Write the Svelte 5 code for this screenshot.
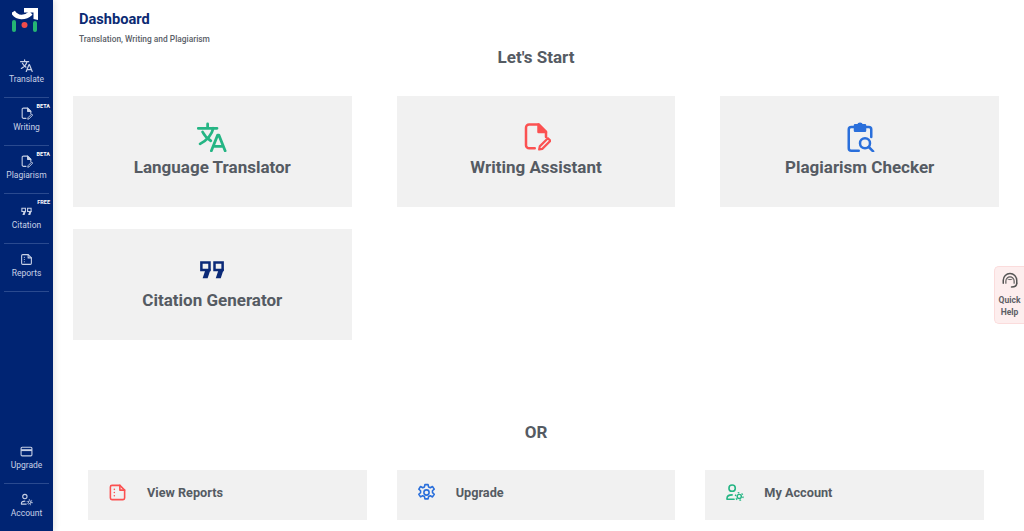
<script>
  const navTop = [
    { label: 'Translate', icon: 'translate' },
    { label: 'Writing', icon: 'write', badge: 'BETA' },
    { label: 'Plagiarism', icon: 'write', badge: 'BETA' },
    { label: 'Citation', icon: 'quote', badge: 'FREE', tall: true },
    { label: 'Reports', icon: 'report' }
  ];
  const cards = [
    { label: 'Language Translator', icon: 'translate', cls: 'green' },
    { label: 'Writing Assistant', icon: 'write', cls: 'red' },
    { label: 'Plagiarism Checker', icon: 'clip', cls: 'blue' },
    { label: 'Citation Generator', icon: 'quote', cls: 'navy' }
  ];
  const links = [
    { label: 'View Reports', icon: 'report', cls: 'red' },
    { label: 'Upgrade', icon: 'gear', cls: 'blue' },
    { label: 'My Account', icon: 'user', cls: 'green' }
  ];
</script>

{#snippet icon(name)}
  <svg viewBox="0 0 24 24" fill="none" stroke="currentColor" stroke-width="2" stroke-linecap="round" stroke-linejoin="round">
    {#if name === 'translate'}
      <path d="M1 5h15M8.500 1.500V5M13 5c-1 4.500-5 9.500-10.500 12.500M4.500 8c1.500 3 4 5.500 6.500 7" stroke-width="2.200" />
      <path d="M11.500 23 16.500 10.500h1L22.500 23M13 19.500h8" stroke-width="2.200" />
    {:else if name === 'write'}
      <g transform="translate(1 0)">
        <path d="M10 21H5.500A2.500 2.500 0 0 1 3 18.500v-14A2.500 2.500 0 0 1 5.500 2H13l6 6v4" />
        <path d="M13 2v6h6z" fill="currentColor" />
        <path d="m13.500 22 .5-2.500 6.500-6.500 2 2-6.500 6.500z" stroke-width="1.700" />
      </g>
    {:else if name === 'clip'}
      <path d="M8 4H5a2 2 0 0 0-2 2v15a2 2 0 0 0 2 2h6M16 4h3a2 2 0 0 1 2 2v6" />
      <path d="M8 2.500h2.500a1.600 1.600 0 0 1 3 0H16V7H8z" fill="currentColor" />
      <circle cx="16" cy="17" r="4" />
      <path d="m19 20 3.500 3.500" />
    {:else if name === 'quote'}
      <path d="M3.500 6h6.500v6H3.500zM14 6h6.500v6H14z" stroke-linecap="butt" stroke-linejoin="miter" />
      <path d="M11 11 8.500 18.500H4.500L6.500 12.500zM21.500 11 19 18.500h-4l2-6z" fill="currentColor" stroke="none" />
    {:else if name === 'report'}
      <path d="M5 3h10l6 6v10a2 2 0 0 1-2 2H5a2 2 0 0 1-2-2V5a2 2 0 0 1 2-2z" />
      <path d="M15 3v6h6" />
      <path d="M8 8v.01M8 12v.01M8 16v.01" />
    {:else if name === 'gear'}
      <circle cx="12" cy="12" r="3.300" />
      <path d="M10 2h4l.6 3 2.300 1 2.600-1.600 2.300 3.400-2.300 2 .1 2.400 2.200 2-2.200 3.400-2.700-1.500-2.200 1-.7 3h-4l-.6-3-2.300-1-2.600 1.500-2.200-3.400 2.200-2v-2.400l-2.200-2 2.200-3.400 2.700 1.600 2.200-1z" />
    {:else if name === 'user'}
      <circle cx="9" cy="6.500" r="4" />
      <path d="M2.500 20.500v-1c0-2.800 2.500-4.500 6.500-4.500M2.500 20.500h9" />
      <circle cx="18" cy="17" r="2.600" stroke-width="1.800" />
      <circle cx="18" cy="17" r="4.800" stroke-width="1.800" stroke-linecap="butt" stroke-dasharray="2 3.030" />
    {/if}
  </svg>
{/snippet}

<div class="app">
  <aside class="side">
    <div class="logo">
      <svg viewBox="0 0 26 26" width="26" height="26">
        <path d="M1 5c4 6.500 12 6.500 18 1" fill="none" stroke="#fff" stroke-width="4.500" />
        <path d="M12 1h14v12l-4.500-1V5.500H12z" fill="#fff" />
        <rect x="0" y="13" width="4" height="12" rx="2" fill="#25b574" />
        <rect x="21" y="14" width="4" height="11" rx="2" fill="#25b574" />
        <circle cx="12.500" cy="18" r="3" fill="#f04b4b" />
      </svg>
    </div>
    <nav class="nav">
      {#each navTop as item}
        <div class="nav-item" class:tall={item.tall}>
          {#if item.badge}<span class="badge">{item.badge}</span>{/if}
          <span class="nav-icon">{@render icon(item.icon)}</span>
          <span>{item.label}</span>
        </div>
      {/each}
    </nav>
    <div class="nav bottom">
      <div class="nav-item">
        <span class="nav-icon">
          <svg viewBox="0 0 24 24" fill="none" stroke="currentColor" stroke-width="2">
            <rect x="2" y="4" width="20" height="16" rx="2" /><path d="M2 9.500h20" stroke-width="3.500" />
          </svg>
        </span>
        <span>Upgrade</span>
      </div>
      <div class="nav-item">
        <span class="nav-icon">{@render icon('user')}</span>
        <span>Account</span>
      </div>
    </div>
  </aside>

  <main class="main">
    <header class="head">
      <h1>Dashboard</h1>
      <p>Translation, Writing and Plagiarism</p>
    </header>
    <h2 class="start">Let's Start</h2>
    <section class="cards">
      {#each cards as card}
        <div class="card">
          <span class="card-icon {card.cls}">{@render icon(card.icon)}</span>
          <span>{card.label}</span>
        </div>
      {/each}
    </section>
    <h2 class="or">OR</h2>
    <section class="links">
      {#each links as link}
        <div class="link">
          <span class="link-icon {link.cls}">{@render icon(link.icon)}</span>
          <span>{link.label}</span>
        </div>
      {/each}
    </section>
  </main>

  <aside class="help">
    <svg viewBox="0 0 24 24" width="18" height="18" fill="none" stroke="#555" stroke-width="2" stroke-linecap="round">
      <path d="M3 15v-4a9 9 0 0 1 18 0v4" />
      <path d="M6.500 15v-3a5.500 5.500 0 0 1 11 0v3" stroke-width="1.500" />
      <path d="M9 9.500c1.500 1 4.500 1 6 0" stroke-width="1.200" />
      <path d="M21 15c0 3-3 5-7 5" />
    </svg>
    <span>Quick<br />Help</span>
  </aside>
</div>

<style>
  :global(body) {
    margin: 0;
    background: #fff;
    font-family: Roboto, "Liberation Sans", sans-serif;
  }
  .app {
    display: flex;
    height: 531px;
    overflow: hidden;
    position: relative;
  }
  .side {
    width: 53px;
    flex: none;
    background: #002473;
    color: #c8d1e6;
    display: flex;
    flex-direction: column;
    box-shadow: 2px 0 6px rgba(0, 0, 0, 0.1);
    font-size: 8.500px;
  }
  .logo {
    height: 50px;
    display: flex;
    justify-content: center;
    padding-top: 7px;
    box-sizing: border-box;
  }
  .logo svg {
    margin-left: -3px;
  }
  .nav {
    display: flex;
    flex-direction: column;
  }
  .nav-item {
    position: relative;
    margin: 0 4px;
    height: 48px;
    display: flex;
    flex-direction: column;
    align-items: center;
    justify-content: flex-end;
    padding-bottom: 12px;
    box-sizing: border-box;
    border-bottom: 1px solid #2a4a8f;
    gap: 2px;
    line-height: 11px;
    white-space: nowrap;
  }
  .nav-item.tall {
    height: 50px;
  }
  .nav-icon {
    width: 13px;
    height: 13px;
    display: block;
  }
  .nav-icon svg {
    width: 100%;
    height: 100%;
    display: block;
  }
  .badge {
    position: absolute;
    top: 5px;
    right: -1px;
    font-size: 5.500px;
    line-height: 6px;
    font-weight: 700;
    color: #fff;
  }
  .bottom {
    margin-top: auto;
  }
  .bottom .nav-item:last-child {
    border-bottom: 0;
    height: 47px;
  }
  .main {
    flex: 1;
    min-width: 0;
    padding: 0 25px 0 20px;
    display: flex;
    flex-direction: column;
  }
  .head {
    padding: 11px 0 0 6px;
    height: 35px;
  }
  h1 {
    margin: 0;
    font-size: 14.600px;
    line-height: 16px;
    font-weight: 700;
    color: #0b2a73;
  }
  .head p {
    margin: 7px 0 0;
    font-size: 8.400px;
    line-height: 11px;
    font-weight: 500;
    color: #5a6068;
  }
  h2 {
    margin: 0;
    text-align: center;
    font-size: 17px;
    line-height: 20px;
    font-weight: 700;
    color: #555b63;
  }
  .start {
    margin-top: 1px;
  }
  .cards {
    margin-top: 29px;
    display: grid;
    grid-template-columns: repeat(3, 1fr);
    column-gap: 45px;
    row-gap: 21.300px;
  }
  .card {
    height: 111.300px;
    background: #f1f1f1;
    display: flex;
    flex-direction: column;
    align-items: center;
    font-size: 17px;
    line-height: 20px;
    font-weight: 700;
    color: #555b63;
    padding-top: 26px;
    box-sizing: border-box;
    gap: 5px;
  }
  .card-icon {
    width: 30px;
    height: 30px;
    display: block;
  }
  .card-icon svg {
    width: 100%;
    height: 100%;
    display: block;
  }
  .green { color: #25b584; }
  .red { color: #fb5151; }
  .blue { color: #2a6fdb; }
  .navy { color: #0b2a78; }
  .or {
    margin-top: 82.100px;
  }
  .links {
    margin: 28px 15px 0;
    display: grid;
    grid-template-columns: repeat(3, 1fr);
    column-gap: 30px;
  }
  .link {
    height: 50px;
    background: #f1f1f1;
    display: flex;
    align-items: center;
    gap: 20px;
    padding: 0 0 5px 20px;
    box-sizing: border-box;
    font-size: 12.700px;
    font-weight: 700;
    color: #555b63;
  }
  .link-icon {
    width: 19px;
    height: 19px;
    display: block;
  }
  .link-icon svg {
    width: 100%;
    height: 100%;
    display: block;
  }
  .help {
    position: absolute;
    right: 0;
    top: 266px;
    width: 30px;
    height: 58px;
    box-sizing: border-box;
    background: #fdeeee;
    border: 1px solid #fbdcdc;
    border-right: 0;
    border-radius: 5px 0 0 5px;
    display: flex;
    flex-direction: column;
    align-items: center;
    padding-top: 5px;
    gap: 4px;
    font-size: 8.500px;
    line-height: 12px;
    font-weight: 700;
    color: #5e6066;
    text-align: center;
  }
</style>
